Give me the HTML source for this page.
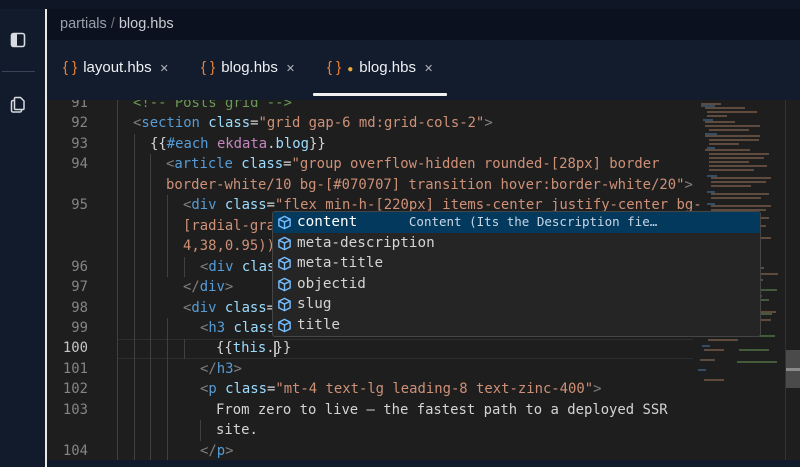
<!DOCTYPE html>
<html style="width:800px;height:467px;overflow:hidden"><head><meta charset="utf-8"><style>
*{margin:0;padding:0;box-sizing:border-box}
body{width:800px;height:467px;overflow:hidden;background:#1e1e1e;position:relative;font-family:"DejaVu Sans Mono",monospace}
.abs{position:absolute}
#side{left:0;top:0;width:45px;height:467px;background:#121b2c}
#vline{left:45px;top:9px;width:2px;height:458px;background:#e8e8e8}
#top{left:0;top:0;width:800px;height:9px;background:#0f1727}
#crumb{left:47px;top:9px;width:753px;height:31px;background:#0b111e;font:14.5px "Liberation Sans",sans-serif;color:#c9ccd2;padding:7px 0 0 13px}
#tabs{left:47px;top:40px;width:753px;height:60px;background:#131c2d;font:15px "Liberation Sans",sans-serif;color:#eef0f3}
.tab{position:absolute;top:19px;white-space:nowrap}
.br{color:#e8823a;margin-right:6px}
.x{color:#b0b4bc;font-size:11px;margin-left:8px}
.code{left:0;top:93px;width:800px;height:367px;overflow:hidden;font-size:13.9px;line-height:20.45px;color:#d4d4d4;white-space:pre}
.ln{position:absolute;left:50px;width:38px;text-align:right;color:#858585;font-size:13.9px}
.t{color:#569cd6}.a{color:#9cdcfe}.s{color:#ce9178}.g{color:#808080}.c{color:#6a9955}.p{color:#c586c0}
.guide{position:absolute;width:1px;background:#404040}
#ac{left:272px;top:211px;width:489px;height:126px;background:#252526;border:1px solid #454545;border-radius:3px;font-size:14.3px;color:#d4d4d4;overflow:hidden}
.row{height:20.5px;line-height:20.5px;padding-left:24px;position:relative;white-space:pre}
.row svg{position:absolute;left:4px;top:3px}
.sel{background:#04395e;color:#fff}
</style></head><body>
<div class="abs" id="side">
 <svg class="abs" style="left:10px;top:32px" width="16" height="16" viewBox="0 0 16 16"><rect x="1.5" y="1.5" width="13" height="13" rx="2" fill="none" stroke="#d8dbe0" stroke-width="1.6"/><rect x="2" y="2" width="5" height="12" fill="#d8dbe0"/></svg>
 <div class="abs" style="left:2px;top:71px;width:33px;height:1px;background:#3a4456"></div>
 <svg class="abs" style="left:10px;top:96px" width="16" height="17" viewBox="0 0 16 17"><path d="M4 4.5H3a1.5 1.5 0 0 0-1.5 1.5v8.5A1.5 1.5 0 0 0 3 16h7a1.5 1.5 0 0 0 1.5-1.5V14" fill="none" stroke="#d8dbe0" stroke-width="1.5"/><path d="M5.5 1.5h5l3.5 3.5v7.5a1 1 0 0 1-1 1h-7.5a1 1 0 0 1-1-1v-10a1 1 0 0 1 1-1z" fill="none" stroke="#d8dbe0" stroke-width="1.5"/></svg>
</div>
<div class="abs" id="top"></div>

<div class="abs code">
<div class="abs" style="left:117px;top:246px;width:576px;height:20px;border-top:1px solid #2e2e2e;border-bottom:1px solid #2e2e2e"></div>
<div class="guide" style="left:117px;top:0;height:370px"></div>
<div class="guide" style="left:134px;top:41px;height:330px"></div>
<div class="guide" style="left:150px;top:61px;height:310px"></div>
<div class="guide" style="left:167px;top:102px;height:82px"></div>
<div class="guide" style="left:184px;top:164px;height:20px"></div>
<div class="guide" style="left:167px;top:225px;height:145px"></div>
<div class="guide" style="left:184px;top:246px;height:20px"></div>
<div class="guide" style="left:200px;top:327px;height:21px"></div>
<div class="ln" style="top:0">91</div><div class="abs" style="left:133px;top:0"><span class="c">&lt;!-- Posts grid --&gt;</span></div>
<div class="ln" style="top:20.45px">92</div><div class="abs" style="left:133px;top:20.45px"><span class="g">&lt;</span><span class="t">section</span> <span class="a">class</span>=<span class="s">"grid gap-6 md:grid-cols-2"</span><span class="g">&gt;</span></div>
<div class="ln" style="top:40.9px">93</div><div class="abs" style="left:150px;top:40.9px">{{<span class="t">#each</span> <span class="p">ekdata</span>.<span class="a">blog</span>}}</div>
<div class="ln" style="top:61.35px">94</div><div class="abs" style="left:166px;top:61.35px"><span class="g">&lt;</span><span class="t">article</span> <span class="a">class</span>=<span class="s">"group overflow-hidden rounded-[28px] border
border-white/10 bg-[#070707] transition hover:border-white/20"</span><span class="g">&gt;</span></div>
<div class="ln" style="top:102.25px">95</div><div class="abs" style="left:183px;top:102.25px"><span class="g">&lt;</span><span class="t">div</span> <span class="a">class</span>=<span class="s">"flex min-h-[220px] items-center justify-center bg-
[radial-gradient(
4,38,0.95))</span></div>
<div class="ln" style="top:163.6px">96</div><div class="abs" style="left:200px;top:163.6px"><span class="g">&lt;</span><span class="t">div</span> <span class="a">class</span></div>
<div class="ln" style="top:184.05px">97</div><div class="abs" style="left:183px;top:184.05px"><span class="g">&lt;/</span><span class="t">div</span><span class="g">&gt;</span></div>
<div class="ln" style="top:204.5px">98</div><div class="abs" style="left:183px;top:204.5px"><span class="g">&lt;</span><span class="t">div</span> <span class="a">class</span>=</div>
<div class="ln" style="top:224.95px">99</div><div class="abs" style="left:200px;top:224.95px"><span class="g">&lt;</span><span class="t">h3</span> <span class="a">class</span></div>
<div class="ln" style="top:245.4px;color:#c6c6c6">100</div><div class="abs" style="left:216px;top:245.4px">{{<span class="a">this</span>.}}</div>
<div class="abs" style="left:274px;top:248px;width:2px;height:16px;background:#aeafad"></div>
<div class="ln" style="top:265.85px">101</div><div class="abs" style="left:200px;top:265.85px"><span class="g">&lt;/</span><span class="t">h3</span><span class="g">&gt;</span></div>
<div class="ln" style="top:286.3px">102</div><div class="abs" style="left:200px;top:286.3px"><span class="g">&lt;</span><span class="t">p</span> <span class="a">class</span>=<span class="s">"mt-4 text-lg leading-8 text-zinc-400"</span><span class="g">&gt;</span></div>
<div class="ln" style="top:306.75px">103</div><div class="abs" style="left:216px;top:306.75px">From zero to live — the fastest path to a deployed SSR
site.</div>
<div class="ln" style="top:347.65px">104</div><div class="abs" style="left:200px;top:347.65px"><span class="g">&lt;/</span><span class="t">p</span><span class="g">&gt;</span></div>
</div>

<svg class="abs" style="left:697px;top:100px" width="88" height="300">
<g stroke-width="1.3" opacity=".8">
<path d="M4 4h20M8 8h40M10 12h50M10 16h20M8 22h30M8 26h55M12 30h40M8 36h55M12 40h50M12 44h30M8 50h45M12 54h60M12 58h55M12 62h40M12 66h58M12 70h45M14 78h60M14 82h55M14 86h40M14 94h58M14 98h50M14 106h60M14 110h55M14 118h58M14 126h55M14 130h40M14 138h60M14 146h50M14 154h40" stroke="#a07860"/>
<path d="M4 6h14M6 20h10M8 34h12M10 48h8M10 76h10M10 92h8M10 104h8M10 116h8M10 124h8M10 136h8" stroke="#4a80b0"/>
<path d="M40 190h40M42 200h30M40 214h35M42 224h20M40 236h38M42 250h30M40 262h40" stroke="#6a9955"/>
</g></svg>
<div class="abs" style="left:694px;top:250px;width:90px;height:150px">
<svg width="90" height="150"><g stroke-width="1.2" opacity=".8"><path d="M20 10h30M10 18h60M14 24h70M14 30h55M18 38h40M18 46h50M20 54h45M22 62h60M22 70h55M18 80h40M14 90h30M10 100h20M6 110h15M10 130h20" stroke="#a07860"/><path d="M10 14h12M8 34h10M12 50h8M12 76h8M8 96h8M4 120h8" stroke="#4a80b0"/></g></svg></div>
<div class="abs" style="left:785px;top:100px;width:1px;height:360px;background:#333"></div>
<div class="abs" style="left:786px;top:350px;width:14px;height:38px;background:#4a4a4a"></div>
<div class="abs" style="left:786px;top:368px;width:14px;height:3px;background:#8a8a8a"></div>

<div class="abs" id="ac">
 <div class="row sel"><svg width="15" height="15" viewBox="0 0 16 16"><path d="M8 1.5l6 3v7l-6 3-6-3v-7z M2 4.5l6 3 6-3M8 7.5v7" fill="none" stroke="#75beff" stroke-width="1.5"/></svg>content      <span style="color:#c8d6e5;font-size:12.5px">Content (Its the Description fie…</span></div>
 <div class="row"><svg width="15" height="15" viewBox="0 0 16 16"><path d="M8 1.5l6 3v7l-6 3-6-3v-7z M2 4.5l6 3 6-3M8 7.5v7" fill="none" stroke="#75beff" stroke-width="1.5"/></svg>meta-description</div>
 <div class="row"><svg width="15" height="15" viewBox="0 0 16 16"><path d="M8 1.5l6 3v7l-6 3-6-3v-7z M2 4.5l6 3 6-3M8 7.5v7" fill="none" stroke="#75beff" stroke-width="1.5"/></svg>meta-title</div>
 <div class="row"><svg width="15" height="15" viewBox="0 0 16 16"><path d="M8 1.5l6 3v7l-6 3-6-3v-7z M2 4.5l6 3 6-3M8 7.5v7" fill="none" stroke="#75beff" stroke-width="1.5"/></svg>objectid</div>
 <div class="row"><svg width="15" height="15" viewBox="0 0 16 16"><path d="M8 1.5l6 3v7l-6 3-6-3v-7z M2 4.5l6 3 6-3M8 7.5v7" fill="none" stroke="#75beff" stroke-width="1.5"/></svg>slug</div>
 <div class="row"><svg width="15" height="15" viewBox="0 0 16 16"><path d="M8 1.5l6 3v7l-6 3-6-3v-7z M2 4.5l6 3 6-3M8 7.5v7" fill="none" stroke="#75beff" stroke-width="1.5"/></svg>title</div>
</div>

<div class="abs" id="crumb"><span style="color:#9aa0aa">partials</span> <span style="color:#6b7280">/</span> blog.hbs</div>
<div class="abs" id="tabs">
 <div class="tab" style="left:16px"><span class="br">{ }</span>layout.hbs<span class="x">✕</span></div>
 <div class="tab" style="left:154px"><span class="br">{ }</span>blog.hbs<span class="x">✕</span></div>
 <div class="tab" style="left:280px"><span class="br">{ }</span><span style="color:#e8a83a;font-size:10px;margin-right:6px">●</span>blog.hbs<span class="x">✕</span></div>
 <div class="abs" style="left:266px;top:53px;width:134px;height:3px;background:#f2f2f2;border-radius:1px"></div>
</div>
<div class="abs" style="left:47px;top:460px;width:753px;height:7px;background:#111a2b"></div>
<div class="abs" id="vline"></div>
</body></html>
